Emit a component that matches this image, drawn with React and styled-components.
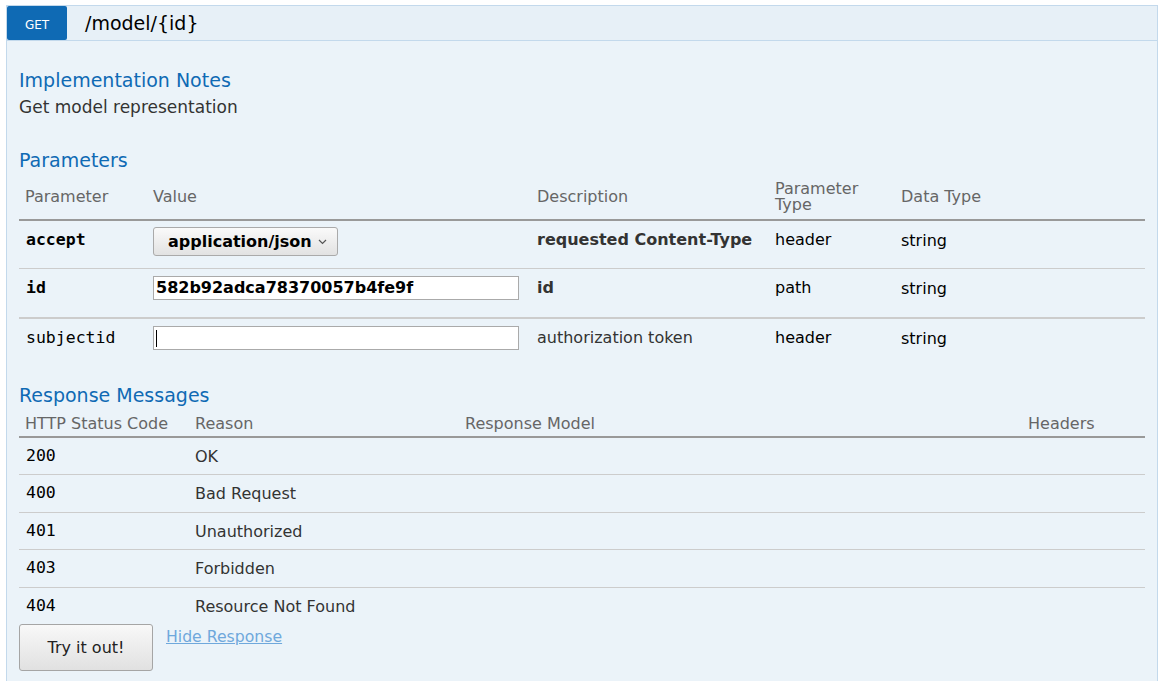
import React from 'react';
import styled, { createGlobalStyle } from 'styled-components';

const Global = createGlobalStyle`
    body {
        margin: 0;
        background: #fff;
        font-family: "DejaVu Sans", Verdana, sans-serif;
    }
`

const Operation = styled.div`
    margin: 5px 9px 0 6px;
    width: 1152px;
    box-sizing: border-box;
`

const Heading = styled.div`
    display: flex;
    align-items: center;
    height: 36px;
    box-sizing: border-box;
    background: #e7f0f7;
    border: 1px solid #c3d9ec;
`

const Method = styled.span`
    display: flex;
    align-items: center;
    justify-content: center;
    width: 60px;
    height: 34px;
    padding-top: 3px;
    box-sizing: border-box;
    align-self: flex-start;
    background: #0f6ab4;
    color: #fff;
    font-size: 12px;
    border-radius: 2px;
`

const Path = styled.span`
    margin-left: 18px;
    font-size: 19px;
    color: #000;
`

const Content = styled.div`
    background: #ebf3f9;
    border: 1px solid #c3d9ec;
    border-top: none;
    border-bottom: none;
    padding: 26px 11px 12px 12px;
    height: 640px;
    box-sizing: border-box;
`

const Title = styled.h4`
    margin: ${p => p.$top || 0}px 0 0 0;
    font-size: 19px;
    font-weight: normal;
    color: #0f6ab4;
    line-height: 26px;
`

const Note = styled.p`
    margin: 0;
    font-size: 17px;
    color: #333;
    line-height: 28px;
`

const Table = styled.table`
    width: 1126px;
    border-collapse: collapse;
    table-layout: fixed;
`

const Row = styled.tr`
    border-top: ${p => p.$line || '1px solid #ccc'};
`

const Th = styled.th`
    text-align: left;
    font-weight: normal;
    color: #666;
    font-size: 16px;
    line-height: 16px;
    padding: ${p => p.$pad || '8px 6px 6px'};
    vertical-align: middle;
    border-bottom: 2px solid #999;
`

const Td = styled.td`
    padding: ${p => p.$pad || '9px 6px'};
    vertical-align: top;
    font-size: 16px;
    color: ${p => p.$color || '#333'};
    height: ${p => p.$h}px;
    box-sizing: border-box;
    font-weight: ${p => (p.$bold ? 'bold' : 'normal')};
`

const Code = styled.code`
    font-family: "DejaVu Sans Mono", monospace;
    font-size: 16.5px;
    margin-left: 1px;
    color: #000;
    font-weight: ${p => (p.$bold ? 'bold' : 'normal')};
`

const Select = styled.div`
    display: inline-flex;
    align-items: center;
    gap: 6px;
    height: 29px;
    box-sizing: border-box;
    margin-top: -3px;
    padding: 0 10px 0 14px;
    border: 1px solid #aaa;
    border-radius: 3px;
    background: linear-gradient(#fafafa, #e2e2e2);
    color: #000;
    font-weight: bold;
    font-size: 16px;
`

const Input = styled.div`
    width: 366px;
    height: 24px;
    box-sizing: border-box;
    border: 1px solid #aaa;
    background: #fff;
    margin-top: -2px;
    padding: 0 2px;
    font-weight: bold;
    font-size: 16px;
    line-height: 22px;
    color: #000;
    display: flex;
    align-items: center;
`

const Caret = styled.span`
    width: 1px;
    height: 17px;
    background: #000;
`

const Actions = styled.div`
    display: flex;
    align-items: flex-start;
    gap: 13px;
    margin-top: -1px;
`

const Button = styled.button`
    width: 134px;
    height: 47px;
    font-family: inherit;
    font-size: 16px;
    color: #222;
    border: 1px solid #a5a5a5;
    border-radius: 3px;
    background: linear-gradient(#f8f8f8, #e1e1e1);
`

const Link = styled.a`
    font-size: 15.7px;
    color: #6fa8dc;
    text-decoration: underline;
    margin-top: 3px;
`

const params = [
    { name: 'accept', bold: true, value: 'select', desc: 'requested Content-Type', descBold: true, type: 'header', h: 48 },
    { name: 'id', bold: true, value: '582b92adca78370057b4fe9f', desc: 'id', descBold: true, type: 'path', h: 50 },
    { name: 'subjectid', bold: false, value: '', desc: 'authorization token', descBold: false, type: 'header', h: 46 },
]

const responses = [
    ['200', 'OK'],
    ['400', 'Bad Request'],
    ['401', 'Unauthorized'],
    ['403', 'Forbidden'],
    ['404', 'Resource Not Found'],
]

function App() {
    return (
        <>
            <Global />
            <Operation>
                <Heading>
                    <Method>GET</Method>
                    <Path>/model/{'{id}'}</Path>
                </Heading>
                <Content>
                    <Title>Implementation Notes</Title>
                    <Note>Get model representation</Note>

                    <Title $top={26}>Parameters</Title>
                    <Table>
                        <colgroup>
                            <col style={{ width: 128 }} />
                            <col style={{ width: 384 }} />
                            <col style={{ width: 238 }} />
                            <col style={{ width: 126 }} />
                            <col />
                        </colgroup>
                        <thead>
                            <tr>
                                <Th>Parameter</Th>
                                <Th>Value</Th>
                                <Th>Description</Th>
                                <Th>Parameter<br />Type</Th>
                                <Th>Data Type</Th>
                            </tr>
                        </thead>
                        <tbody>
                            {params.map((p, i) => (
                                <Row key={p.name} $line={i === 0 ? 'none' : i === 2 ? '2px solid #ccc' : undefined}>
                                    <Td $h={p.h}>
                                        <Code $bold={p.bold}>{p.name}</Code>
                                    </Td>
                                    <Td $h={p.h}>
                                        {p.value === 'select' ? (
                                            <Select>
                                                application/json
                                                <svg width="9" height="6" viewBox="0 0 9 6">
                                                    <path d="M1 1l3.5 3.5L8 1" fill="none" stroke="#555" strokeWidth="1.2" />
                                                </svg>
                                            </Select>
                                        ) : (
                                            <Input>{p.value || <Caret />}</Input>
                                        )}
                                    </Td>
                                    <Td $h={p.h} $bold={p.descBold}>{p.desc}</Td>
                                    <Td $h={p.h} $color="#000">{p.type}</Td>
                                    <Td $h={p.h} $color="#000" $pad="10px 6px 8px">string</Td>
                                </Row>
                            ))}
                        </tbody>
                    </Table>

                    <Title $top={18}>Response Messages</Title>
                    <Table>
                        <colgroup>
                            <col style={{ width: 170 }} />
                            <col style={{ width: 270 }} />
                            <col style={{ width: 563 }} />
                            <col />
                        </colgroup>
                        <thead>
                            <tr>
                                <Th $pad="8px 6px 4px">HTTP Status Code</Th>
                                <Th $pad="8px 6px 4px">Reason</Th>
                                <Th $pad="8px 6px 4px">Response Model</Th>
                                <Th $pad="8px 6px 4px">Headers</Th>
                            </tr>
                        </thead>
                        <tbody>
                            {responses.map(([code, reason], i) => (
                                <Row key={code} $line={i === 0 ? 'none' : undefined}>
                                    <Td $h={37.5} $pad="8px 6px">
                                        <Code>{code}</Code>
                                    </Td>
                                    <Td $h={37.5} $pad="9px 6px 7px">{reason}</Td>
                                    <Td $h={37.5} />
                                    <Td $h={37.5} />
                                </Row>
                            ))}
                        </tbody>
                    </Table>

                    <Actions>
                        <Button>Try it out!</Button>
                        <Link>Hide Response</Link>
                    </Actions>
                </Content>
            </Operation>
        </>
    )
}

export default App;
